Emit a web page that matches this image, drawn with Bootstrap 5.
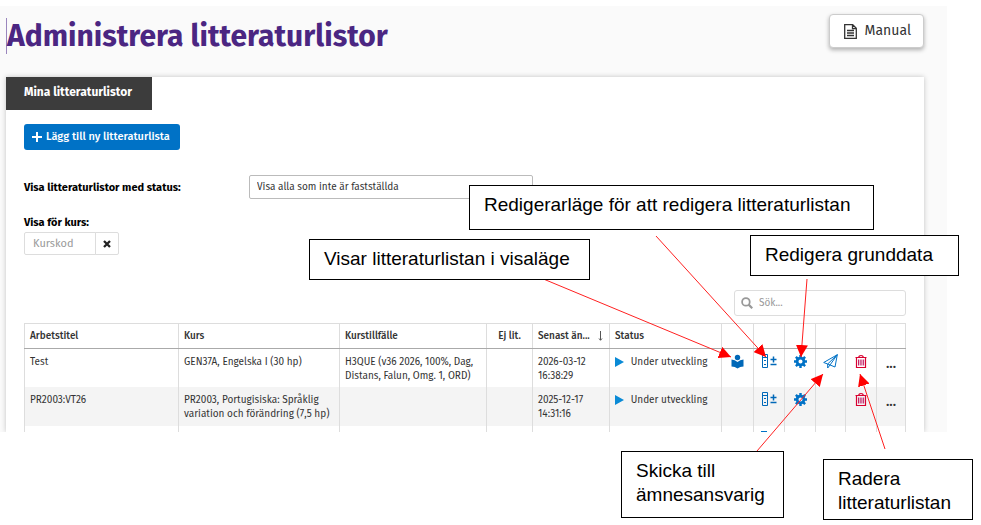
<!DOCTYPE html>
<html lang="sv">
<head>
<meta charset="utf-8">
<meta name="viewport" content="width=device-width, initial-scale=1">
<title>Administrera litteraturlistor</title>
<link href="https://cdn.jsdelivr.net/npm/bootstrap@5.3.0/dist/css/bootstrap.min.css" rel="stylesheet">
<style>
body{font-family:"Fira Sans",Roboto,"Noto Sans",sans-serif;font-size:10px;line-height:14px;color:#333;background:#fff;padding-top:6px}
.app{margin-right:34px;padding:0 23px 0 6px;background:#fafafa;overflow:hidden}
.page-title{font-size:30px;line-height:36px;font-weight:700;color:#4b2682;border-left:1px solid #9a86bd}
.top{height:71px;padding-top:12px}
.btn-manual{font-size:14px;line-height:20px;padding:6px 12px 6px 14px;margin-top:-4px;background:#fff;border:1px solid #ccc;border-radius:4px;color:#333;box-shadow:0 2px 4px rgba(0,0,0,.3)}
.panel{background:#fff;box-shadow:0 0 5px rgba(0,0,0,.22)}
.tab-btn{font-size:12px;line-height:17px;font-weight:700;background:#3c3c3c;color:#fff;border:0;padding:7px 20px 9px 18px}
.panel-main{padding:14px 18px 0}
.btn-new{font-size:11px;line-height:16px;font-weight:500;padding:5px 10px 5px 8px;background:#0072c6;border:0;border-radius:3px;color:#fff}
.filter{margin-top:25px}
.filter label,.kurs-label{font-size:11px;font-weight:700;color:#000}
.filter label{width:225px;padding-top:2px}
.status-select{width:284px;height:24px;font-size:10px;line-height:14px;padding:0 7px;border:1px solid #bbb;border-radius:2px;background:#fff;color:#333;appearance:none}
.kurs-label{margin-top:17px;line-height:14px}
.kurs{width:95px;height:23px;margin-top:2px}
.kurs input{width:72px;font-size:11px;padding:0 8px;border:1px solid #ddd;border-radius:2px 0 0 2px}
.kurs button{width:24px;margin-left:-1px;padding:0;border:1px solid #ddd;border-radius:0 2px 2px 0;background:#fff}
input::placeholder{color:#999!important}
.search{width:172px;height:26px;margin-top:35px;border:1px solid #ddd;border-radius:3px;padding-left:6px}
.search input{border:0;outline:0;font-size:10px;margin-left:4px;min-width:0;background:none}
.lists{margin:7px 0 0;table-layout:fixed;width:100%;border:1px solid #ddd;border-bottom:0}
.lists th,.lists td{padding:5px;border-right:1px solid #ddd;vertical-align:top;white-space:nowrap;color:#333}
.lists th{height:25px;font-weight:500;border-bottom:1px solid #aaa}
.lists td{height:38px;padding:6px 5px 4px}
.lists tr.alt td{height:39px;background:#f4f4f4}
.lists tr.peek td{height:6px;padding:5px 7px 0;line-height:0}
.lists td.act{text-align:center;padding:5px 0 0}
.act button{border:0;padding:0;background:none;display:inline-block;line-height:0}
.act .more{font-size:14px;line-height:20px;font-weight:500;color:#333}
.c-title{width:auto}.c-kurs{width:161px}.c-till{width:147px}.c-lit{width:46px}.c-date{width:77px}.c-stat{width:112px}.c-w{width:32px}.c-i{width:31px}.c-n{width:30px}.c-m{width:29px}
.note{position:absolute;background:#fff;border:1px solid #000;color:#000;font:19px/24px "Liberation Sans",Arial,sans-serif;padding:7px 14px 8px;white-space:nowrap}
.arrows{position:absolute;left:0;top:0;pointer-events:none}
.n1{left:469px;top:185px;width:405px;padding-bottom:12px}
.n2{left:309px;top:239px;width:281px}
.n3{left:750px;top:235px;width:209px}
.n4{left:621px;top:451px;width:163px;padding-bottom:10px}
.n5{left:823px;top:459px;width:150px;padding-bottom:4px}
</style>
</head>
<body class="position-relative min-vh-100">
<svg class="d-none" aria-hidden="true">
<symbol id="i-edit" viewBox="0 0 15 15"><path d="M.5.5h5v13h-5zM.5 3.500h5M2 6.500h2M2 10.500h2" fill="none" stroke="#0068b8"/><path d="M8.500 5.500h6M11.500 2.500v6M8.500 10.500h6" stroke="#0068b8" stroke-width="1.500" fill="none"/></symbol>
<symbol id="i-gear" viewBox="0 0 16 16"><circle cx="8" cy="8" r="4.200" fill="none" stroke="#0072c6" stroke-width="3.400"/><path d="M8 0v4M8 12v4M0 8h4M12 8h4M2.300 2.300l2.500 2.500M11.200 11.200l2.500 2.500M13.700 2.300l-2.500 2.500M4.800 11.200l-2.500 2.500" stroke="#0072c6" stroke-width="3"/></symbol>
<symbol id="i-trash" viewBox="0 0 12 13"><path d="M.5 2.500h11M3.500 2.500Q4 .5 6 .5t2.500 2M1.500 3v9.500h9V3" fill="none" stroke="#d9002f" stroke-width="1.200"/><path d="M3.500 4.500v6M5.200 4.500v6M6.900 4.500v6M8.600 4.500v6" stroke="#c22368" stroke-width="1"/></symbol>
<symbol id="i-play" viewBox="0 0 9 10"><path d="M0 0l9 5-9 5z" fill="#0a8ad6"/></symbol>
</svg>
<main class="app">
<header class="top d-flex justify-content-between align-items-start">
<h1 class="page-title mb-0">Administrera litteraturlistor</h1>
<button class="btn-manual d-flex align-items-center gap-2" type="button">
<svg width="13" height="15" viewBox="0 0 13 15" fill="none" stroke="#333" stroke-width="1.300"><path d="M.7.7h8l3.600 3.600v10H.7zM8.500.7v4h4M3 6.500h7M3 9h7M3 11.500h7"/></svg>Manual</button>
</header>
<section class="panel">
<button class="tab-btn d-block" type="button">Mina litteraturlistor</button>
<div class="panel-main">
<button class="btn-new d-flex align-items-center" type="button"><svg class="me-1" width="10" height="10" viewBox="0 0 10 10"><path d="M0 5h10M5 0v10" stroke="#fff" stroke-width="2"/></svg>Lägg till ny litteraturlista</button>
<div class="filter d-flex align-items-center"><label for="status">Visa litteraturlistor med status:</label>
<select class="status-select" id="status"><option>Visa alla som inte är fastställda</option></select></div>
<label class="kurs-label d-block" for="kurs">Visa för kurs:</label>
<div class="kurs d-flex"><input id="kurs" type="text" placeholder="Kurskod"><button type="button" aria-label="Rensa"><svg width="8" height="8" viewBox="0 0 8 8"><path d="M1 1l6 6M7 1L1 7" stroke="#222" stroke-width="2.300"/></svg></button></div>
<div class="search ms-auto d-flex align-items-center"><svg width="12" height="12" viewBox="0 0 11 11" fill="none" stroke="#999"><circle cx="4.500" cy="4.500" r="3.500" stroke-width="1.600"/><path d="M7 7l3.300 3.300" stroke-width="2"/></svg><input type="search" aria-label="Sök" placeholder="Sök..."></div>
<table class="lists">
<colgroup><col class="c-title"><col class="c-kurs"><col class="c-till"><col class="c-lit"><col class="c-date"><col class="c-stat"><col class="c-w"><col class="c-i"><col class="c-i"><col class="c-n"><col class="c-i"><col class="c-m"></colgroup>
<thead><tr><th>Arbetstitel</th><th>Kurs</th><th>Kurstillfälle</th><th class="text-center">Ej lit.</th><th><span class="d-flex justify-content-between align-items-center"><span>Senast än...</span><svg width="7" height="10" viewBox="0 0 7 10"><path d="M3.500 0v9M2 7.500l1.500 1.800L5 7.500" fill="none" stroke="#555"/></svg></span></th><th>Status</th><th></th><th></th><th></th><th></th><th></th><th></th></tr></thead>
<tbody>
<tr><td>Test</td><td>GEN37A, Engelska I (30 hp)</td><td>H3QUE (v36 2026, 100%, Dag,<br>Distans, Falun, Omg. 1, ORD)</td><td></td><td>2026-03-12<br>16:38:29</td><td><svg class="me-1" width="9" height="10"><use href="#i-play"/></svg> Under utveckling</td>
<td class="act"><button type="button" aria-label="Visa"><svg width="13" height="15" viewBox="0 0 13 15"><circle cx="6.500" cy="3.500" r="2.700" fill="#0068b8"/><path d="M.5 5.500Q4 5.500 6.500 8 9 5.500 12.500 5.500v7Q9 12.500 6.500 14.500 4 12.500.5 12.500z" fill="#0068b8"/></svg></button></td>
<td class="act"><button type="button" aria-label="Redigera litteraturlistan"><svg width="15" height="15"><use href="#i-edit"/></svg></button></td>
<td class="act"><button type="button" aria-label="Redigera grunddata"><svg width="13" height="15"><use href="#i-gear"/></svg></button></td>
<td class="act"><button type="button" aria-label="Skicka"><svg width="15" height="15" viewBox="0 0 15 15" fill="none" stroke="#0072c6" stroke-linejoin="round"><path d="M14.300.7L.7 8.500l4 1.500 7.300 3zM14.300.7L4.700 10v4l2.300-3M14.300.7L7 11"/></svg></button></td>
<td class="act"><button type="button" aria-label="Radera"><svg width="12" height="15"><use href="#i-trash"/></svg></button></td>
<td class="act"><button class="more" type="button" aria-label="Mer">...</button></td></tr>
<tr class="alt"><td>PR2003:VT26</td><td>PR2003, Portugisiska: Språklig<br>variation och förändring (7,5 hp)</td><td></td><td></td><td>2025-12-17<br>14:31:16</td><td><svg class="me-1" width="9" height="10"><use href="#i-play"/></svg> Under utveckling</td><td></td>
<td class="act"><button type="button" aria-label="Redigera litteraturlistan"><svg width="15" height="15"><use href="#i-edit"/></svg></button></td>
<td class="act"><button type="button" aria-label="Redigera grunddata"><svg width="13" height="15"><use href="#i-gear"/></svg></button></td><td></td>
<td class="act"><button type="button" aria-label="Radera"><svg width="12" height="15"><use href="#i-trash"/></svg></button></td>
<td class="act"><button class="more" type="button" aria-label="Mer">...</button></td></tr>
<tr class="peek"><td></td><td></td><td></td><td></td><td></td><td></td><td></td><td><svg class="d-block" width="6" height="1"><path d="M0 0h6v1H0z" fill="#0072c6"/></svg></td><td></td><td></td><td></td><td></td></tr>
</tbody></table>
</div>
</section>
</main>
<svg class="arrows" width="960" height="500" fill="none" stroke="#ff2020" stroke-width="1" aria-hidden="true">
<defs><marker id="tip" viewBox="0 0 12 12" markerWidth="12" markerHeight="12" markerUnits="userSpaceOnUse" refX="12" refY="6" orient="auto"><path d="M0 0l12 6-12 6z" fill="#f00" stroke="none"/></marker></defs>
<g marker-end="url(#tip)"><path d="M541 278L731 357"/><path d="M656 236L766 357"/><path d="M807 279L801 357"/><path d="M757 451L823 374"/><path d="M885 449L860 374"/></g></svg>
<div class="note n1">Redigerarläge för att redigera litteraturlistan</div>
<div class="note n2">Visar litteraturlistan i visaläge</div>
<div class="note n3">Redigera grunddata</div>
<div class="note n4">Skicka till<br>ämnesansvarig</div>
<div class="note n5">Radera<br>litteraturlistan</div>
<script src="https://cdn.jsdelivr.net/npm/bootstrap@5.3.0/dist/js/bootstrap.bundle.min.js"></script>
</body>
</html>
